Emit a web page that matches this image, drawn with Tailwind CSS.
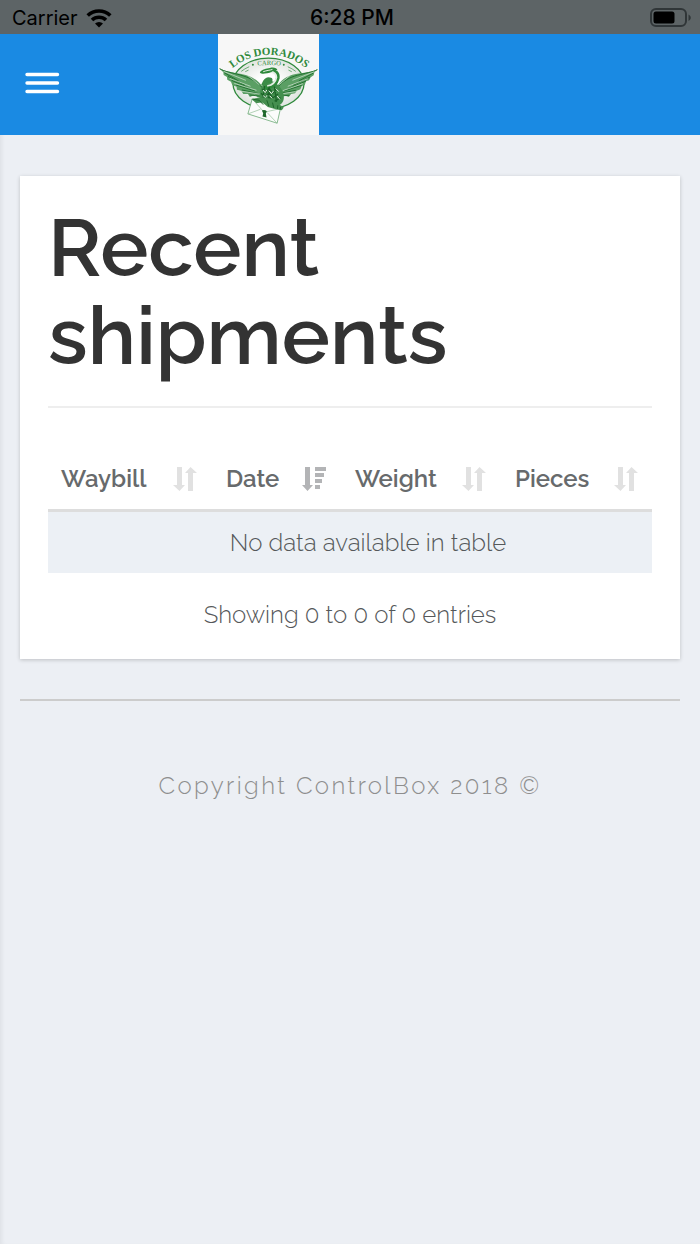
<!DOCTYPE html>
<html lang="en">
<head>
<meta charset="utf-8">
<meta name="viewport" content="width=device-width, initial-scale=1">
<title>Recent shipments</title>
<script src="https://cdn.jsdelivr.net/npm/@tailwindcss/browser@4"></script>
</head>
<body class="min-h-screen bg-[#eceff4] font-['Raleway','Lato',sans-serif] text-2xl text-[#676a6c] shadow-[inset_4px_0_4px_-2px_rgba(0,0,0,0.06)]">
<svg class="hidden" aria-hidden="true">
  <symbol id="sort" viewBox="0 0 24 24"><path d="M4 0h5v18h3l-5.500 6L0 18h4zM15 24V6h-3l5.500-6L24 6h-4v18z"/></symbol>
  <symbol id="sort-desc" viewBox="0 0 24 24"><path d="M3 0h5v18h3l-5.500 6L0 18h3zM13 0h11v4H13zM13 6h9v4h-9zM13 12h7v4h-7zM13 18h5v4h-5z"/></symbol>
</svg>

<div class="grid h-[34px] grid-cols-3 items-center bg-[#5d6466] pt-px pr-2 pl-3 font-['Inter',sans-serif] text-xl text-black">
  <div class="flex items-center gap-2">
    <span>Carrier</span>
    <svg class="h-5 w-[26px]" viewBox="0 0 26 20" aria-label="Wi-Fi"><path d="M13 19.500 9 15.500a5.800 5.800 0 0 1 8 0z"/><path d="M1.700 7.500a16.300 16.300 0 0 1 22.600 0M6 12a10.200 10.200 0 0 1 14 0" fill="none" stroke="#000" stroke-width="3.600"/></svg>
  </div>
  <span class="text-center text-[21px] font-medium">6:28 PM</span>
  <svg class="h-5 w-[42px] justify-self-end" viewBox="0 0 42 20" aria-label="Battery"><rect x="1" y="1" width="35" height="17" rx="5" fill="none" stroke="#303638" stroke-width="2"/><rect x="3.500" y="3.500" width="21" height="12" rx="2.500"/><path d="M38.500 6.500c3 1.500 3 5 0 6.500z" fill="#303638"/></svg>
</div>

<header class="flex h-[101px] items-center bg-[#1a8ae3]">
  <button type="button" aria-label="Open menu" class="ml-6 mr-[158px] flex w-9 items-center justify-center pb-1">
    <svg class="h-6 w-9" viewBox="0 0 36 24"><path d="M3 3.500h30.500M3 12h30.500M3 20.500h30.500" stroke="#fff" stroke-width="3.400" stroke-linecap="round"/></svg>
  </button>
  <a href="#" aria-label="Los Dorados Cargo" class="block">
    <svg class="size-[101px] bg-[#f7f7f7]" viewBox="10 12 304 303">
      <defs>
        <path id="arcName" d="M42 125A172 172 0 0 1 286 125"/>
        <path id="arcCargo" d="M118 108Q162 102 210 108"/>
        <radialGradient id="glow"><stop offset="0.300" stop-color="#fff"/><stop offset="1" stop-color="#dfe4df"/></radialGradient>
      </defs>
      <ellipse cx="162" cy="160" rx="107" ry="76" fill="url(#glow)" stroke="#2f8a3c" stroke-width="4"/>
      <g fill="#2f8a3c" font-family="Liberation Serif, serif">
        <text text-anchor="middle" font-size="33" font-weight="700"><textPath href="#arcName" startOffset="50%">LOS DORADOS</textPath><textPath href="#arcCargo" startOffset="50%" font-size="20" font-weight="400">CARGO</textPath></text>
        <circle cx="115" cy="104" r="3"/><circle cx="208" cy="104" r="3"/>
      </g>
      <path d="M80 124q10-8 24-14M220 110q14 6 24 14M92 125l10-5M222 120l10 5" stroke="#2f8a3c" stroke-width="2" fill="none"/>
      <path d="M13 114C32 126 58 127 80 132C112 138 131 151 145 171L148 201L130 203L121 194L106 201L100 192L86 192L80 182L67 179L66 170L53 165L49 155L38 149L37 141L27 135L26 127Z" fill="#5b9f64"/>
      <path d="M311 117C290 128 266 128 244 132C214 138 199 151 187 171L185 200L202 203L209 196L223 201L230 192L242 190L247 182L258 178L262 168L271 165L275 154L284 151L289 142L298 136L300 127Z" fill="#5b9f64"/>
      <g fill="none" stroke="#237231" stroke-width="3">
        <path d="M15 116C45 134 105 128 145 175M29 128L72 153M40 139L91 166M51 151L108 176M64 165L121 183M82 180L133 191M105 195L140 199"/>
        <path d="M309 119C278 135 221 129 187 175M297 129L253 153M287 141L236 166M275 153L221 176M262 166L209 183M244 181L197 190M225 196L194 198"/>
      </g>
      <g fill="none" stroke="#dce9dc" stroke-width="2">
        <path d="M27 124L94 151M45 145L108 169M59 160L126 181M81 184L140 193M99 136L135 165"/>
        <path d="M300 125L234 151M280 146L220 169M265 161L205 182M244 185L192 193M227 136L194 164"/>
      </g>
      <path d="M150 160C158 152 172 150 183 158C202 172 214 196 206 214C200 228 182 232 168 224L138 215C130 198 138 172 150 160Z" fill="#438f4e"/>
      <path d="M152 172C172 172 186 162 190 144C192 130 184 122 166 120" fill="none" stroke="#2f8a3c" stroke-width="11"/>
      <path d="M158 168C174 165 184 156 186 142C186 132 180 126 166 124" fill="none" stroke="#e4efe5" stroke-width="5"/>
      <path d="M136 127C142 118 156 116 166 114C176 111 188 113 189 121C184 119 178 121 172 125C164 130 152 130 146 131C142 132 136 130 136 127Z" fill="#2f8a3c"/>
      <path d="M146 125C156 121 166 121 174 118" fill="none" stroke="#e4efe5" stroke-width="3"/>
      <path d="M146 152q10-16 26-8q6 8-4 14q-12 0-14 10q-10 2-14-4z" fill="#3b8c47"/>
      <g fill="none" stroke="#1c6429" stroke-width="4">
        <path d="M143 177l11 11 9-13 12 14 12-12M140 190l11 12 12-13 12 15 16-12M141 203l11 10 12-12 12 16 22-14M150 168l-5 44M164 170l-1 49M180 170l6 46"/>
      </g>
      <path d="M146 180l6 8 5-8M163 182l8 9 6-8M146 197l7 6 4-7M165 197l8 8M188 198l8 10M184 176l9 9" fill="none" stroke="#e8f2e8" stroke-width="3"/>
      <path d="M113 207L198 236L188 280L100 252Z" fill="#fbfcfb" stroke="#4f9a5a" stroke-width="2"/>
      <path d="M113 207L149 247L198 236M100 252L138 238M188 280L158 248" fill="none" stroke="#90bd96" stroke-width="2"/>
      <path d="M110 207L126 220L143 217L160 231L184 238L202 241L208 233L190 221L168 206L142 202Z" fill="#468f50"/>
      <path d="M116 208l18 3 12 13M157 211l6 18M174 218l4 16M190 226l-1 11M198 231l-1 8" fill="none" stroke="#1e662b" stroke-width="3"/>
      <path d="M142 242Q150 238 157 244L154 251L156 263L144 260L146 250Z" fill="#1f692c"/>
    </svg>
  </a>
</header>

<main class="px-5 pt-[41px]">
  <section class="bg-white px-7 pt-7 pb-7 shadow-[0_1px_4px_rgba(0,0,0,0.2)]">
    <h1 class="text-[81px] leading-[88px] font-semibold text-[#333]">Recent shipments</h1>
    <hr class="mt-[26px] mb-10 border-t-2 border-[#eee]">
    <table class="w-full table-fixed border-collapse">
      <colgroup><col class="w-[165px]"><col class="w-[129px]"><col class="w-40"><col></colgroup>
      <thead>
        <tr class="border-b-[3px] border-[#ddd] text-left">
          <th scope="col" class="h-[62px] pt-0.5 pr-4 pl-[13px] font-semibold"><button type="button" class="flex w-full items-center justify-between">Waybill<svg class="size-6 fill-[#e1e1e1]"><use href="#sort"/></svg></button></th>
          <th scope="col" aria-sort="descending" class="pt-0.5 pr-4 pl-[13px] font-semibold"><button type="button" class="flex w-full items-center justify-between">Date<svg class="size-6 fill-[#b3b4b6]"><use href="#sort-desc"/></svg></button></th>
          <th scope="col" class="pt-0.5 pr-4 pl-[13px] font-semibold"><button type="button" class="flex w-full items-center justify-between">Weight<svg class="size-6 fill-[#e1e1e1]"><use href="#sort"/></svg></button></th>
          <th scope="col" class="pt-0.5 pr-[14px] pl-[13px] font-semibold"><button type="button" class="flex w-full items-center justify-between">Pieces<svg class="size-6 fill-[#e1e1e1]"><use href="#sort"/></svg></button></th>
        </tr>
      </thead>
      <tbody>
        <tr><td colspan="4" class="h-[63px] bg-[#ecf0f5] pt-px pr-3 pl-12 text-center font-light text-[#55585a]">No data available in table</td></tr>
      </tbody>
    </table>
    <p class="mt-[26px] text-center font-light text-[#55585a]">Showing 0 to 0 of 0 entries</p>
  </section>
  <hr class="mt-10 border-t-2 border-[#ccc]">
</main>
<footer class="mt-[69px] text-center font-light tracking-widest text-[#8e8e8e]">Copyright ControlBox 2018 ©</footer>
</body>
</html>
